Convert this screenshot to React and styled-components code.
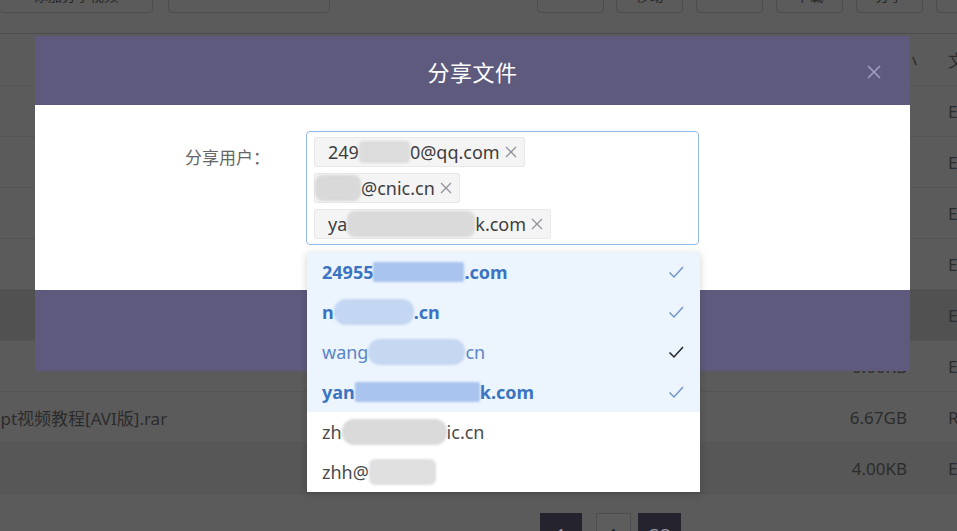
import React from "react";
import styled, { createGlobalStyle } from "styled-components";

const Global = createGlobalStyle`
  html, body { margin: 0; padding: 0; }
  body { font-family: "Noto Sans", "Noto Sans CJK SC", sans-serif; }
`;

const Page = styled.div`
  position: relative;
  width: 957px;
  height: 531px;
  overflow: hidden;
  background: #5b5b5b;
`;

const Toolbar = styled.div`
  display: flex;
  align-items: flex-start;
  height: 53px;
  margin-top: -20px;
  border-bottom: 1px solid #4b4b4b;
`;

const ToolButton = styled.div`
  box-sizing: border-box;
  width: ${(p) => p.$w}px;
  margin-left: ${(p) => p.$ml || 0}px;
  height: 33px;
  border: 1px solid #4d4d4d;
  border-radius: 4px;
  font: 14px "Noto Sans CJK SC", sans-serif;
  color: #262626;
  display: flex;
  align-items: center;
  justify-content: center;
  flex-shrink: 0;
  padding-bottom: 4px;
`;

const Table = styled.div`
  display: flex;
  flex-direction: column;
`;

const Row = styled.div`
  box-sizing: border-box;
  display: grid;
  grid-template-columns: 1fr 120px 37px;
  align-items: center;
  height: ${(p) => p.$h || 51}px;
  border-bottom: 1px solid #545454;
  background: ${(p) => p.$bg || "#5b5b5b"};
  color: #2c2c2c;
  font: 17px "Noto Sans", "Noto Sans CJK SC", sans-serif;
`;

const NameCell = styled.div`
  white-space: nowrap;
  overflow: hidden;
  margin-left: -10px;
`;

const SizeCell = styled.div`
  text-align: right;
  padding-right: ${(p) => (p.$pr != null ? p.$pr : 13)}px;
  white-space: nowrap;
`;

const TypeCell = styled.div`
  padding-left: 28px;
  white-space: nowrap;
`;

const Pager = styled.div`
  display: flex;
  padding-left: 540px;
  margin-top: 19px;
`;

const PageBox = styled.div`
  box-sizing: border-box;
  width: ${(p) => p.$w}px;
  height: 34px;
  margin-left: ${(p) => p.$ml || 0}px;
  background-color: ${(p) => (p.$dark ? "#24232e" : "#5d5d5d")};
  border: 1px solid ${(p) => (p.$dark ? "#24232e" : "#4e4e4e")};
  color: ${(p) => (p.$dark ? "#9a9aa6" : "#222")};
  font: 16px "Noto Sans", sans-serif;
  display: flex;
  justify-content: center;
  padding-top: 10px;
`;

const Modal = styled.div`
  position: absolute;
  left: 35px;
  top: 36px;
  width: 875px;
  display: flex;
  flex-direction: column;
`;

const ModalHeader = styled.div`
  height: 69px;
  background: #5e5a7d;
  display: flex;
  align-items: center;
  justify-content: center;
  position: relative;
  color: #fff;
  font: 22px "Noto Sans CJK SC", sans-serif;
  letter-spacing: 0.5px;
`;

const CloseBtn = styled.svg`
  position: absolute;
  right: 29px;
  top: 29px;
`;

const ModalBody = styled.div`
  height: 185px;
  background: #fff;
  box-sizing: border-box;
  padding-top: 26px;
`;

const FormRow = styled.div`
  display: flex;
  align-items: flex-start;
`;

const Label = styled.div`
  box-sizing: border-box;
  width: 271px;
  padding-right: 36px;
  text-align: right;
  font: 17px/52px "Noto Sans CJK SC", sans-serif;
  color: #666;
`;

const SelectBox = styled.div`
  box-sizing: border-box;
  width: 393px;
  height: 114px;
  border: 1px solid #91bbe6;
  border-radius: 4px;
  padding: 5px 7px;
  display: flex;
  flex-direction: column;
  align-items: flex-start;
  gap: 6px;
`;

const Tag = styled.div`
  box-sizing: border-box;
  height: 30px;
  display: flex;
  align-items: center;
  padding: 0 7px 0 ${(p) => (p.$pl != null ? p.$pl : 13)}px;
  background: #f4f4f5;
  border: 1px solid #e8e8ea;
  border-radius: 2px;
  color: #3d3d3d;
  font: 18px "Noto Sans", sans-serif;
  white-space: nowrap;
`;

const TagCloseIcon = styled.svg`
  margin-left: 5px;
  flex-shrink: 0;
`;

const TagClose = () => (
  <TagCloseIcon width="12" height="12" viewBox="0 0 12 12">
    <path d="M1 1 L11 11 M11 1 L1 11" stroke="#909399" strokeWidth="1.3" />
  </TagCloseIcon>
);

const Mask = styled.span`
  display: inline-block;
  width: ${(p) => p.$w}px;
  height: ${(p) => p.$h || 24}px;
  background: ${(p) => p.$c};
  border-radius: ${(p) => p.$r || 4}px;
  filter: blur(1.2px);
  vertical-align: middle;
  flex-shrink: 0;
`;

const ModalFooter = styled.div`
  height: 81px;
  background: #5e5a7d;
`;

const Dropdown = styled.div`
  position: absolute;
  left: 307px;
  top: 252px;
  width: 393px;
  background: #fff;
  box-shadow: 0 2px 8px rgba(0, 0, 0, 0.18);
  display: flex;
  flex-direction: column;
`;

const Option = styled.div`
  box-sizing: border-box;
  height: 40px;
  display: flex;
  align-items: center;
  padding: 0 15px;
  background: ${(p) => (p.$selected ? "#ecf4fd" : "#fff")};
  color: ${(p) => (p.$selected ? (p.$bold ? "#3b74c2" : "#5b85c6") : "#4a4a4a")};
  font: ${(p) => (p.$bold ? 700 : 400)} 18px "Noto Sans", sans-serif;
  white-space: nowrap;
`;

const OptionText = styled.div`
  flex: 1;
  display: flex;
  align-items: center;
`;

const Check = ({ color }) => (
  <svg width="18" height="18" viewBox="0 0 18 18">
    <polyline points="2.5,9.5 7,14 16,4" fill="none" stroke={color} strokeWidth="1.5" />
  </svg>
);

const Close = () => (
  <CloseBtn width="14" height="14" viewBox="0 0 14 14">
    <path d="M1 1 L13 13 M13 1 L1 13" stroke="#a19dbd" strokeWidth="1.6" />
  </CloseBtn>
);

const rows = [
  { name: "", size: "", type: "E" },
  { name: "", size: "", type: "E" },
  { name: "", size: "", type: "E" },
  { name: "", size: "", type: "E" },
  { name: "", size: "", type: "E", bg: "#515151" },
  { name: "", size: "0.00KB", type: "E" },
  { name: "ppt视频教程[AVI版].rar", size: "6.67GB", type: "R" },
  { name: "", size: "4.00KB", type: "E", bg: "#575757" },
];

export default function App() {
  return (
    <Page>
      <Global />
      <Toolbar>
        <ToolButton $w={154} $ml={-1}>添加分享视频</ToolButton>
        <ToolButton $w={162} $ml={15}></ToolButton>
        <ToolButton $w={67} $ml={207}></ToolButton>
        <ToolButton $w={67} $ml={12}>移动</ToolButton>
        <ToolButton $w={67} $ml={13}></ToolButton>
        <ToolButton $w={67} $ml={13}>下载</ToolButton>
        <ToolButton $w={67} $ml={13}>分享</ToolButton>
        <ToolButton $w={67} $ml={13}></ToolButton>
      </Toolbar>
      <Table>
        <Row $h={52}>
          <NameCell />
          <SizeCell $pr={3}>大小</SizeCell>
          <TypeCell>文</TypeCell>
        </Row>
        {rows.map((r, i) => (
          <Row key={i} $bg={r.bg}>
            <NameCell>{r.name}</NameCell>
            <SizeCell>{r.size}</SizeCell>
            <TypeCell>{r.type}</TypeCell>
          </Row>
        ))}
      </Table>
      <Pager>
        <PageBox $w={42} $dark>1</PageBox>
        <PageBox $w={35} $ml={14}>1</PageBox>
        <PageBox $w={43} $ml={7} $dark>GO</PageBox>
      </Pager>

      <Modal>
        <ModalHeader>
          分享文件
          <Close />
        </ModalHeader>
        <ModalBody>
          <FormRow>
            <Label>分享用户：</Label>
            <SelectBox>
              <Tag>
                249<Mask $w={51} $h={22} $c="#dcdcdc" />0@qq.com
                <TagClose />
              </Tag>
              <Tag $pl={0}>
                <Mask $w={46} $h={26} $c="#d9d9d9" $r={8} />@cnic.cn
                <TagClose />
              </Tag>
              <Tag>
                ya<Mask $w={128} $h={26} $c="#dadada" $r={8} />k.com
                <TagClose />
              </Tag>
            </SelectBox>
          </FormRow>
        </ModalBody>
        <ModalFooter />
      </Modal>

      <Dropdown>
        <Option $selected $bold>
          <OptionText>
            24955<Mask $w={91} $h={20} $c="#a9c4ee" $r={2} />.com
          </OptionText>
          <Check color="#7297cc" />
        </Option>
        <Option $selected $bold>
          <OptionText>
            n<Mask $w={80} $h={26} $c="#c3d6f2" $r={12} />.cn
          </OptionText>
          <Check color="#7297cc" />
        </Option>
        <Option $selected>
          <OptionText>
            wang<Mask $w={97} $h={26} $c="#c5d7f1" $r={12} />cn
          </OptionText>
          <Check color="#222" />
        </Option>
        <Option $selected $bold>
          <OptionText>
            yan<Mask $w={125} $h={20} $c="#a9c4ee" $r={2} />k.com
          </OptionText>
          <Check color="#7297cc" />
        </Option>
        <Option>
          <OptionText>
            zh<Mask $w={105} $h={26} $c="#dadada" $r={12} />ic.cn
          </OptionText>
        </Option>
        <Option>
          <OptionText>
            zhh@<Mask $w={67} $h={26} $c="#e0e0e0" $r={6} />
          </OptionText>
        </Option>
      </Dropdown>
    </Page>
  );
}
